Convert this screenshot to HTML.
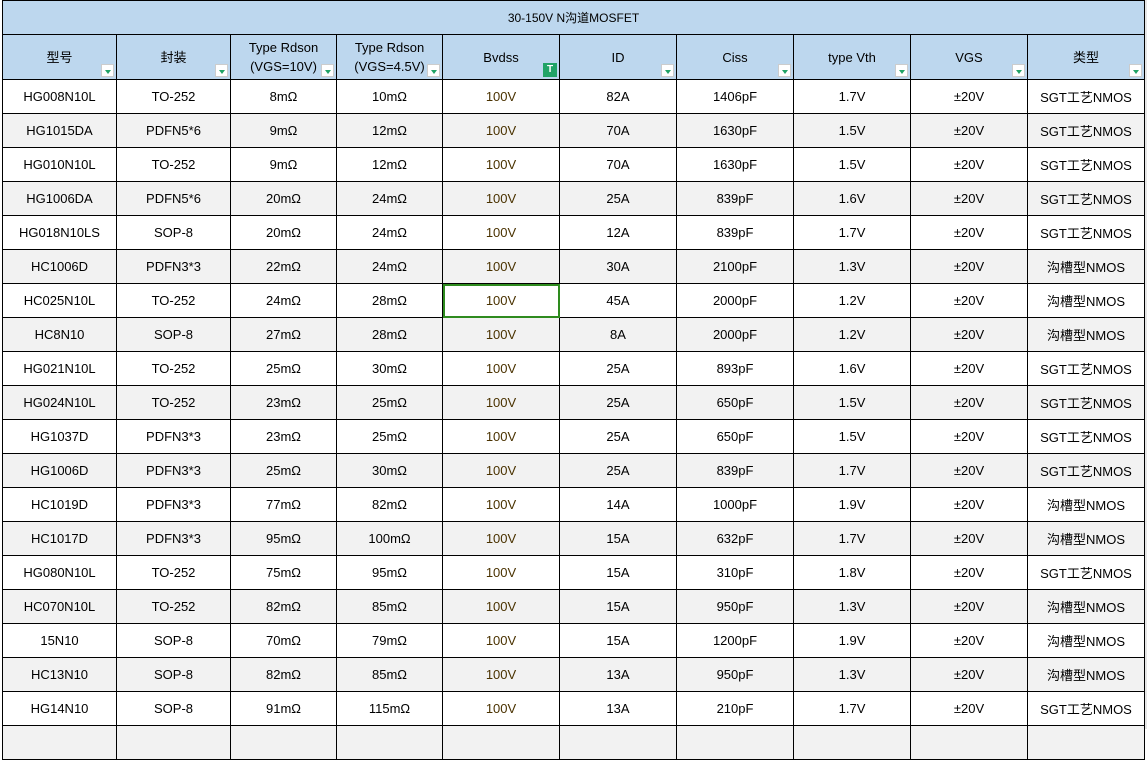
<!DOCTYPE html>
<html><head><meta charset="utf-8"><style>
body{margin:0;background:#fff;width:1147px;height:729px;overflow:hidden;font-family:"Liberation Sans","Noto Sans CJK SC",sans-serif;font-size:13px;color:#000;}
table{position:absolute;left:2px;top:0;border-collapse:collapse;table-layout:fixed;}
td{border:1px solid #000;text-align:center;padding:0;height:33px;white-space:nowrap;position:relative;background:#fff;}
tr.t td{background:#bdd7ee;height:33px;font-size:12px;}
tr.h td{background:#bdd7ee;height:44px;line-height:19px;}
tr:nth-child(even):not(.t):not(.h) td{background:#f2f2f2;}
td.v{color:#4a3200;}
.f{position:absolute;right:2px;bottom:2px;width:13px;height:13px;background:#fff;border:1px solid #ccc;box-sizing:border-box;}
.f:after{content:"";position:absolute;left:3px;top:5px;border-left:3px solid transparent;border-right:3px solid transparent;border-top:4px solid #21a366;}
.g{position:absolute;right:2px;bottom:2px;width:14px;height:14px;background:#21a366;color:#fff;font-size:10px;line-height:14px;font-weight:bold;}
.sel{outline:2px solid #2e8b1e;outline-offset:-2px;}
.rest{position:absolute;left:1145px;top:0;width:2px;height:729px;background:#e6e6e6;}
</style></head><body>
<div class="rest"></div>
<table>
<colgroup><col style="width:114px"><col style="width:114px"><col style="width:106px"><col style="width:106px"><col style="width:117px"><col style="width:117px"><col style="width:117px"><col style="width:117px"><col style="width:117px"><col style="width:117px"></colgroup>
<tr class="t"><td colspan="10">30-150V N沟道MOSFET</td></tr>
<tr class="h"><td>型号<span class="f"></span></td><td>封装<span class="f"></span></td><td>Type Rdson<br>(VGS=10V)<span class="f"></span></td><td>Type Rdson<br>(VGS=4.5V)<span class="f"></span></td><td>Bvdss<span class="g">T</span></td><td>ID<span class="f"></span></td><td>Ciss<span class="f"></span></td><td>type Vth<span class="f"></span></td><td>VGS<span class="f"></span></td><td>类型<span class="f"></span></td></tr>
<tr><td>HG008N10L</td><td>TO-252</td><td>8mΩ</td><td>10mΩ</td><td class="v">100V</td><td>82A</td><td>1406pF</td><td>1.7V</td><td>±20V</td><td>SGT工艺NMOS</td></tr>
<tr><td>HG1015DA</td><td>PDFN5*6</td><td>9mΩ</td><td>12mΩ</td><td class="v">100V</td><td>70A</td><td>1630pF</td><td>1.5V</td><td>±20V</td><td>SGT工艺NMOS</td></tr>
<tr><td>HG010N10L</td><td>TO-252</td><td>9mΩ</td><td>12mΩ</td><td class="v">100V</td><td>70A</td><td>1630pF</td><td>1.5V</td><td>±20V</td><td>SGT工艺NMOS</td></tr>
<tr><td>HG1006DA</td><td>PDFN5*6</td><td>20mΩ</td><td>24mΩ</td><td class="v">100V</td><td>25A</td><td>839pF</td><td>1.6V</td><td>±20V</td><td>SGT工艺NMOS</td></tr>
<tr><td>HG018N10LS</td><td>SOP-8</td><td>20mΩ</td><td>24mΩ</td><td class="v">100V</td><td>12A</td><td>839pF</td><td>1.7V</td><td>±20V</td><td>SGT工艺NMOS</td></tr>
<tr><td>HC1006D</td><td>PDFN3*3</td><td>22mΩ</td><td>24mΩ</td><td class="v">100V</td><td>30A</td><td>2100pF</td><td>1.3V</td><td>±20V</td><td>沟槽型NMOS</td></tr>
<tr><td>HC025N10L</td><td>TO-252</td><td>24mΩ</td><td>28mΩ</td><td class="v sel">100V</td><td>45A</td><td>2000pF</td><td>1.2V</td><td>±20V</td><td>沟槽型NMOS</td></tr>
<tr><td>HC8N10</td><td>SOP-8</td><td>27mΩ</td><td>28mΩ</td><td class="v">100V</td><td>8A</td><td>2000pF</td><td>1.2V</td><td>±20V</td><td>沟槽型NMOS</td></tr>
<tr><td>HG021N10L</td><td>TO-252</td><td>25mΩ</td><td>30mΩ</td><td class="v">100V</td><td>25A</td><td>893pF</td><td>1.6V</td><td>±20V</td><td>SGT工艺NMOS</td></tr>
<tr><td>HG024N10L</td><td>TO-252</td><td>23mΩ</td><td>25mΩ</td><td class="v">100V</td><td>25A</td><td>650pF</td><td>1.5V</td><td>±20V</td><td>SGT工艺NMOS</td></tr>
<tr><td>HG1037D</td><td>PDFN3*3</td><td>23mΩ</td><td>25mΩ</td><td class="v">100V</td><td>25A</td><td>650pF</td><td>1.5V</td><td>±20V</td><td>SGT工艺NMOS</td></tr>
<tr><td>HG1006D</td><td>PDFN3*3</td><td>25mΩ</td><td>30mΩ</td><td class="v">100V</td><td>25A</td><td>839pF</td><td>1.7V</td><td>±20V</td><td>SGT工艺NMOS</td></tr>
<tr><td>HC1019D</td><td>PDFN3*3</td><td>77mΩ</td><td>82mΩ</td><td class="v">100V</td><td>14A</td><td>1000pF</td><td>1.9V</td><td>±20V</td><td>沟槽型NMOS</td></tr>
<tr><td>HC1017D</td><td>PDFN3*3</td><td>95mΩ</td><td>100mΩ</td><td class="v">100V</td><td>15A</td><td>632pF</td><td>1.7V</td><td>±20V</td><td>沟槽型NMOS</td></tr>
<tr><td>HG080N10L</td><td>TO-252</td><td>75mΩ</td><td>95mΩ</td><td class="v">100V</td><td>15A</td><td>310pF</td><td>1.8V</td><td>±20V</td><td>SGT工艺NMOS</td></tr>
<tr><td>HC070N10L</td><td>TO-252</td><td>82mΩ</td><td>85mΩ</td><td class="v">100V</td><td>15A</td><td>950pF</td><td>1.3V</td><td>±20V</td><td>沟槽型NMOS</td></tr>
<tr><td>15N10</td><td>SOP-8</td><td>70mΩ</td><td>79mΩ</td><td class="v">100V</td><td>15A</td><td>1200pF</td><td>1.9V</td><td>±20V</td><td>沟槽型NMOS</td></tr>
<tr><td>HC13N10</td><td>SOP-8</td><td>82mΩ</td><td>85mΩ</td><td class="v">100V</td><td>13A</td><td>950pF</td><td>1.3V</td><td>±20V</td><td>沟槽型NMOS</td></tr>
<tr><td>HG14N10</td><td>SOP-8</td><td>91mΩ</td><td>115mΩ</td><td class="v">100V</td><td>13A</td><td>210pF</td><td>1.7V</td><td>±20V</td><td>SGT工艺NMOS</td></tr>
<tr><td></td><td></td><td></td><td></td><td></td><td></td><td></td><td></td><td></td><td></td></tr>
</table>
</body></html>
